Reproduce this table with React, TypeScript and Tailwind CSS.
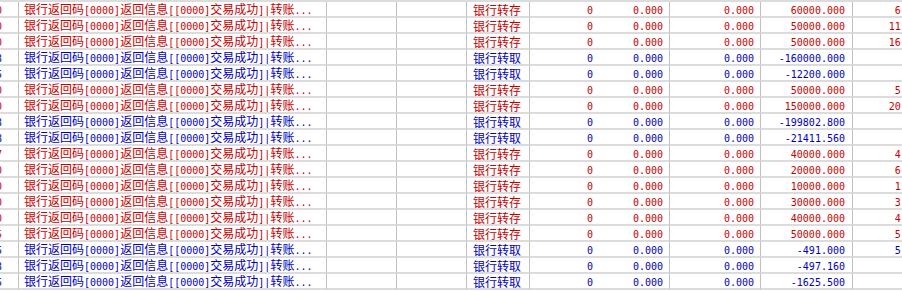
import React from 'react';

type Row = {
  lead: string;
  deposit: boolean;
  amount: string;
  balance: string;
};

const rows: Row[] = [
  { lead: '0', deposit: true, amount: '60000.000', balance: '6 482.150' },
  { lead: '0', deposit: true, amount: '50000.000', balance: '11 482.150' },
  { lead: '0', deposit: true, amount: '50000.000', balance: '16 482.150' },
  { lead: '3', deposit: false, amount: '-160000.000', balance: '' },
  { lead: '5', deposit: false, amount: '-12200.000', balance: '' },
  { lead: '0', deposit: true, amount: '50000.000', balance: '5 282.150' },
  { lead: '0', deposit: true, amount: '150000.000', balance: '20 282.150' },
  { lead: '3', deposit: false, amount: '-199802.800', balance: '' },
  { lead: '8', deposit: false, amount: '-21411.560', balance: '' },
  { lead: '7', deposit: true, amount: '40000.000', balance: '4 470.590' },
  { lead: '0', deposit: true, amount: '20000.000', balance: '6 470.590' },
  { lead: '0', deposit: true, amount: '10000.000', balance: '1 470.590' },
  { lead: '0', deposit: true, amount: '30000.000', balance: '3 470.590' },
  { lead: '0', deposit: true, amount: '40000.000', balance: '4 470.590' },
  { lead: '5', deposit: true, amount: '50000.000', balance: '5 470.590' },
  { lead: '5', deposit: false, amount: '-491.000', balance: '5 979.590' },
  { lead: '3', deposit: false, amount: '-497.160', balance: '' },
  { lead: '5', deposit: false, amount: '-1625.500', balance: '' },
];

const MESSAGE = '银行返回码[0000]返回信息[[0000]交易成功]|转账...';

// SimSun-ish look: CJK at 12px, half-width latin at 6px per char
function Txt({ text }: { text: string }) {
  const runs = text.match(/[\u4e00-\u9fff]+|[^\u4e00-\u9fff]+/g) ?? [];
  return (
    <span className="whitespace-pre">
      {runs.map((run, i) =>
        /[\u4e00-\u9fff]/.test(run) ? (
          <span key={i} className="font-['Noto_Sans_CJK_SC',sans-serif] text-[12px]">
            {run}
          </span>
        ) : (
          <span key={i} className="font-['DejaVu_Sans_Mono',monospace] text-[10px]">
            {run}
          </span>
        ),
      )}
    </span>
  );
}

const cell =
  'flex h-full shrink-0 items-center overflow-hidden whitespace-nowrap border-b-2 border-b-[#dcdcdc] leading-[14px]';

export default function App() {
  return (
    <div className="h-[291px] w-[902px] overflow-hidden bg-white">
      <div className="border-t-2 border-t-[#dcdcdc]">
        {rows.map((row, i) => {
          const color = row.deposit ? 'text-[#c80000]' : 'text-[#0000c0]';
          return (
            <div key={i} className={`flex h-[16px] ${color}`}>
              <div className={`${cell} w-[19px] justify-end border-r border-r-[#c0c0c0] pr-[16px]`}>
                <Txt text={`12:0${row.lead}`} />
              </div>
              <div className={`${cell} w-[308px] border-r border-r-[#c0c0c0] pl-[5px]`}>
                <Txt text={MESSAGE} />
              </div>
              <div className={`${cell} w-[70px] border-r border-r-[#c0c0c0]`} />
              <div className={`${cell} w-[70px] border-r border-r-[#c0c0c0]`} />
              <div className={`${cell} w-[63px] border-r border-r-[#c0c0c0] pl-[6px]`}>
                <Txt text={row.deposit ? '银行转存' : '银行转取'} />
              </div>
              <div className={`${cell} w-[69px] justify-end pr-[6px]`}>
                <Txt text="0" />
              </div>
              <div className={`${cell} w-[71px] justify-end border-r border-r-[#c0c0c0] pr-[6px]`}>
                <Txt text="0.000" />
              </div>
              <div className={`${cell} w-[91px] justify-end border-r border-r-[#c0c0c0] pr-[6px]`}>
                <Txt text="0.000" />
              </div>
              <div className={`${cell} w-[92px] justify-end border-r border-r-[#c0c0c0] pr-[7px]`}>
                <Txt text={row.amount} />
              </div>
              <div className={`${cell} w-[102px] justify-end pr-[6px]`}>
                <Txt text={row.balance} />
              </div>
            </div>
          );
        })}
      </div>
    </div>
  );
}
